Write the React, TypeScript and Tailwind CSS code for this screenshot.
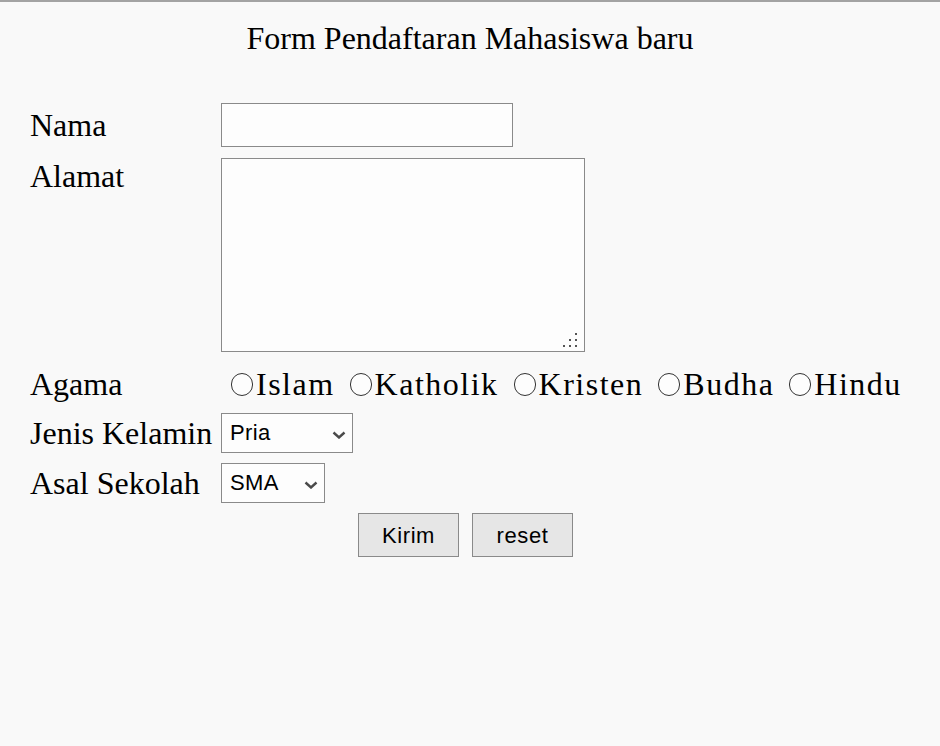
import React from 'react';

const serif = "font-['Liberation_Serif','Times_New_Roman',serif]";
const sans = "font-['Liberation_Sans',Arial,sans-serif]";

const agama = ['Islam', 'Katholik', 'Kristen', 'Budha', 'Hindu'];

const Chevron = () => (
  <svg className="pointer-events-none absolute right-[7px] top-[18px]" width="14" height="8" viewBox="0 0 14 8">
    <path d="M1.5 1.5 L7 6.5 L12.5 1.5" fill="none" stroke="#4a4a4a" strokeWidth="2.4" />
  </svg>
);

const Select: React.FC<{ width: string; options: string[] }> = ({ width, options }) => (
  <div className={`relative ${width} h-[40px]`}>
    <select
      className={`${sans} block h-full w-full appearance-none border border-[#8a8a8a] bg-[#fdfdfd] pl-[8px] text-[22px] leading-[38px] tracking-[0.4px] text-black outline-none`}
      defaultValue={options[0]}
    >
      {options.map((o) => (
        <option key={o}>{o}</option>
      ))}
    </select>
    <Chevron />
  </div>
);

export default function App() {
  return (
    <div className={`${serif} min-h-[746px] w-full border-t-2 border-[#a3a3a3] bg-[#f9f9f9] text-black`}>
      <h1 className="pt-[18px] text-center text-[32px] leading-[36px]">Form Pendaftaran Mahasiswa baru</h1>

      <form className="pl-[30px] pt-[47px] text-[32px]" onSubmit={(e) => e.preventDefault()}>
        <div className="flex items-center">
          <label className="w-[191px] leading-[44px]">Nama</label>
          <input type="text" className="block h-[44px] w-[292px] border border-[#8a8a8a] bg-[#fdfdfd] outline-none" />
        </div>

        <div className="mt-[11px] flex items-start">
          <label className="w-[191px] leading-[37px]">Alamat</label>
          <div className="relative">
            <textarea className="block h-[194px] w-[364px] resize-none border border-[#8a8a8a] bg-[#fdfdfd] outline-none" />
            <svg className="pointer-events-none absolute bottom-[5px] right-[8px]" width="15" height="15" viewBox="0 0 15 15">
              <g fill="#555">
                <rect x="13" y="1" width="2" height="2" />
                <rect x="7" y="7" width="2" height="2" />
                <rect x="13" y="7" width="2" height="2" />
                <rect x="1" y="13" width="2" height="2" />
                <rect x="7" y="13" width="2" height="2" />
                <rect x="13" y="13" width="2" height="2" />
              </g>
            </svg>
          </div>
        </div>

        <div className="mt-[10px] flex h-[44px] items-center">
          <label className="w-[191px] leading-[36px]">Agama</label>
          <div className="flex items-center pl-[10px] leading-[36px]">
            {agama.map((a, i) => (
              <label key={a} className={`flex items-center ${i > 0 ? 'ml-[15px]' : ''}`}>
                <span className="mr-[3px] inline-block h-[23px] w-[22px] rounded-full border border-[#333] bg-[#fdfdfd]" />
                <span className="tracking-[1.5px]">{a}</span>
              </label>
            ))}
          </div>
        </div>

        <div className="mt-[7px] flex items-center">
          <label className="w-[191px] leading-[36px]">Jenis Kelamin</label>
          <Select width="w-[132px]" options={['Pria', 'Wanita']} />
        </div>

        <div className="mt-[10px] flex items-center">
          <label className="w-[191px] leading-[36px]">Asal Sekolah</label>
          <Select width="w-[104px]" options={['SMA', 'SMK', 'MA']} />
        </div>

        <div className="mt-[10px] flex w-[871px] justify-center gap-[13px]">
          <button type="submit" className={`${sans} h-[44px] w-[101px] border border-[#8a8a8a] bg-[#e6e6e6] text-[22px] tracking-[0.6px]`}>
            Kirim
          </button>
          <button type="reset" className={`${sans} h-[44px] w-[101px] border border-[#8a8a8a] bg-[#e6e6e6] text-[22px] tracking-[0.6px]`}>
            reset
          </button>
        </div>
      </form>
    </div>
  );
}
